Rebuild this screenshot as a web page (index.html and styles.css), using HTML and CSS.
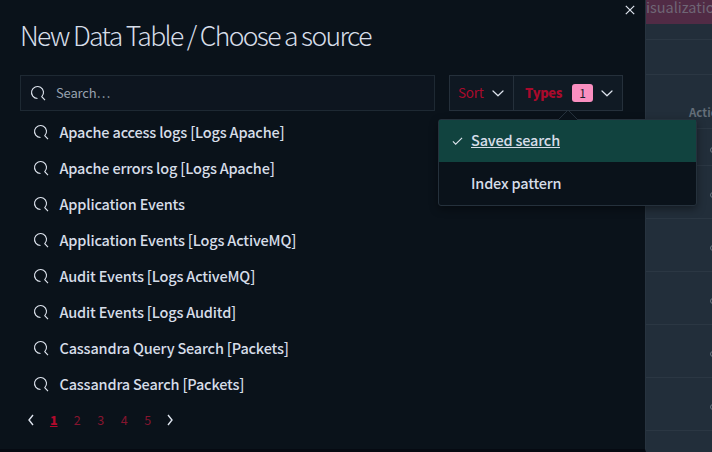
FILE: index.html
```html
<!DOCTYPE html>
<html lang="en">
<head>
<meta charset="utf-8">
<title>New Data Table</title>
<link rel="stylesheet" href="styles.css">
</head>
<body>
<svg class="defs" width="0" height="0">
  <symbol id="search" viewBox="0 0 16 16"><path d="M7.500 13.500A6 6 0 1 1 11.800 11.700L15 15.200" fill="none" stroke="currentColor" stroke-width="1.100"/></symbol>
  <symbol id="down" viewBox="0 0 16 16"><path d="M3 6 8 10.800 13 6" fill="none" stroke="currentColor" stroke-width="1.200" stroke-linecap="round" stroke-linejoin="round"/></symbol>
</svg>
<div class="app">
  <main class="dialog">
    <h1 class="title">New Data Table / Choose a source</h1>
    <div class="toolbar">
      <div class="search"><svg class="icon"><use href="#search"/></svg><span>Search…</span></div>
      <div class="filters">
        <div class="filter sort"><span>Sort</span><svg class="icon"><use href="#down"/></svg></div>
        <div class="filter types"><span class="types-label">Types</span><span class="badge">1</span><svg class="icon"><use href="#down"/></svg></div>
      </div>
    </div>
    <ul class="list">
      <li><svg class="icon"><use href="#search"/></svg><span>Apache access logs [Logs Apache]</span></li>
      <li><svg class="icon"><use href="#search"/></svg><span>Apache errors log [Logs Apache]</span></li>
      <li><svg class="icon"><use href="#search"/></svg><span>Application Events</span></li>
      <li><svg class="icon"><use href="#search"/></svg><span>Application Events [Logs ActiveMQ]</span></li>
      <li><svg class="icon"><use href="#search"/></svg><span>Audit Events [Logs ActiveMQ]</span></li>
      <li><svg class="icon"><use href="#search"/></svg><span>Audit Events [Logs Auditd]</span></li>
      <li><svg class="icon"><use href="#search"/></svg><span>Cassandra Query Search [Packets]</span></li>
      <li><svg class="icon"><use href="#search"/></svg><span>Cassandra Search [Packets]</span></li>
    </ul>
    <nav class="pages">
      <svg class="arrow" viewBox="0 0 8 12"><path d="M6 1 2 6l4 5"/></svg>
      <b>1</b><span>2</span><span>3</span><span>4</span><span>5</span>
      <svg class="arrow" viewBox="0 0 8 12"><path d="m2 1 4 5-4 5"/></svg>
    </nav>
    <svg class="close" viewBox="0 0 10 10"><path d="m.8.8 8.400 8.400m0-8.400L.8 9.200"/></svg>
  </main>
  <aside class="behind">
    <div class="create">isualization</div>
    <div class="band"></div>
    <div class="band tall"></div>
    <div class="head">Actions</div>
    <div class="row short"><i></i></div>
    <div class="row"><i></i></div>
    <div class="row"><i></i></div>
    <div class="row"><i></i></div>
    <div class="row"><i></i></div>
    <div class="row"><i></i></div>
  </aside>
  <div class="menu">
    <svg class="pointer" viewBox="0 0 22 11"><path d="M1 11 11 1l10 10"/></svg>
    <div class="option selected"><svg class="check" viewBox="0 0 12 10"><path d="m1 5.500 3 3L11 1.500"/></svg><span>Saved search</span></div>
    <div class="option"><span>Index pattern</span></div>
  </div>
</div>
</body>
</html>
```
FILE: styles.css
```css
* { box-sizing: border-box; }
body { margin: 0; background: #0a121a; color: #d6dde8; font-family: "Noto Sans CJK SC", sans-serif; font-size: 14px; }
.defs { position: absolute; }
.app { position: relative; display: flex; width: 712px; height: 452px; overflow: hidden; }
.dialog { position: relative; width: 646px; border-right: 1px solid #27333f; border-bottom: 3px solid #060a12; padding: 14px 22px 0 20px; background: #0a121a; }
.title { margin: 0; height: 61px; font-size: 26.500px; font-weight: 300; line-height: 41px; letter-spacing: -1.640px; white-space: nowrap; }
.toolbar { display: flex; gap: 14px; height: 36px; }
.search { display: flex; align-items: center; gap: 10px; width: 415px; padding: 0 0 1px 9px; border: 1px solid #1e2933; background: #0d151f; color: #98a2af; font-size: 13px; }
.search span { letter-spacing: -.150px; }
.icon { width: 16px; height: 16px; flex: none; color: #dfe5ef; }
.filters { display: flex; width: 174px; border: 1px solid #25303b; background: #0f1822; color: #a90a2c; font-size: 13.500px; letter-spacing: -.2px; }
.filter { display: flex; align-items: center; padding-bottom: 2px; }
.filter .icon { margin-top: 1px; }
.sort { width: 64px; padding-left: 8px; justify-content: space-between; padding-right: 7px; border-right: 1px solid #25303b; }
.types { flex: 1; padding-left: 11px; background: #101a24; }
.types-label { width: 47px; font-size: 13px; font-weight: 900; letter-spacing: -.350px; }
.badge { width: 21px; height: 18px; margin: 1px 6px 0 0; border-radius: 3px; background: #fa8fc0; color: #17202b; font-size: 12px; line-height: 18px; text-align: center; }
.list { margin: 3px 0 0; padding: 0; list-style: none; }
.list li { display: flex; align-items: center; gap: 10.500px; height: 36px; padding-left: 13px; font-size: 14.500px; font-weight: 500; letter-spacing: -.180px; white-space: nowrap; }
.list span { padding-bottom: 2px; }
.pages { display: flex; align-items: center; height: 34px; padding-left: 7px; color: #86152f; font-size: 12.500px; }
.pages b, .pages span { width: 23.500px; text-align: center; }
.pages b { margin-left: 7px; color: #b30a2d; font-weight: 900; text-decoration: underline; }
.arrow { width: 8px; height: 12px; margin-top: 2px; fill: none; stroke: #dfe5ef; stroke-width: 1.400; }
.pages .arrow:last-child { margin-left: 6px; }
.close { position: absolute; top: 5px; right: 10px; width: 10px; height: 10px; fill: none; stroke: #dfe5ef; stroke-width: 1.200; }
.behind { width: 66px; background: #222e3a; color: #58636f; overflow: hidden; }
.create { height: 24px; background: #512b45; color: #6f6675; font-size: 14.500px; line-height: 13px; }
.band { height: 16px; border-bottom: 1px solid #2b3743; }
.band.tall { height: 35px; }
.head { height: 54px; padding: 29px 0 0 43px; border-bottom: 1px solid #2b3743; color: #646e79; font-size: 11.500px; font-weight: 700; line-height: 16px; }
.row { height: 53px; display: flex; align-items: center; justify-content: flex-end; border-bottom: 1px solid #2b3743; }
.row.short { height: 37px; }
.row i { width: 6px; height: 6px; margin: 6px -4px 0 0; border: 1px solid #69747f; border-radius: 3px; }
.menu { position: absolute; left: 438px; top: 119px; width: 259px; height: 87px; border: 1px solid #25313c; border-radius: 3px; background: #0a121a; box-shadow: 0 3px 8px #0006; }
.option { display: flex; align-items: center; height: 43px; padding: 0 0 2px 32px; font-size: 14.500px; font-weight: 500; letter-spacing: -.180px; }
.selected { height: 42px; padding-left: 13px; gap: 8px; background: #11433f; }
.selected span { padding-bottom: 1px; text-decoration: underline; }
.check { width: 11px; height: 10px; margin-top: 1px; fill: none; stroke: #dfe5ef; stroke-width: 1.200; }
.pointer { position: absolute; left: 118px; top: -11px; width: 22px; height: 11px; fill: #0a121a; stroke: #25313c; }
```
